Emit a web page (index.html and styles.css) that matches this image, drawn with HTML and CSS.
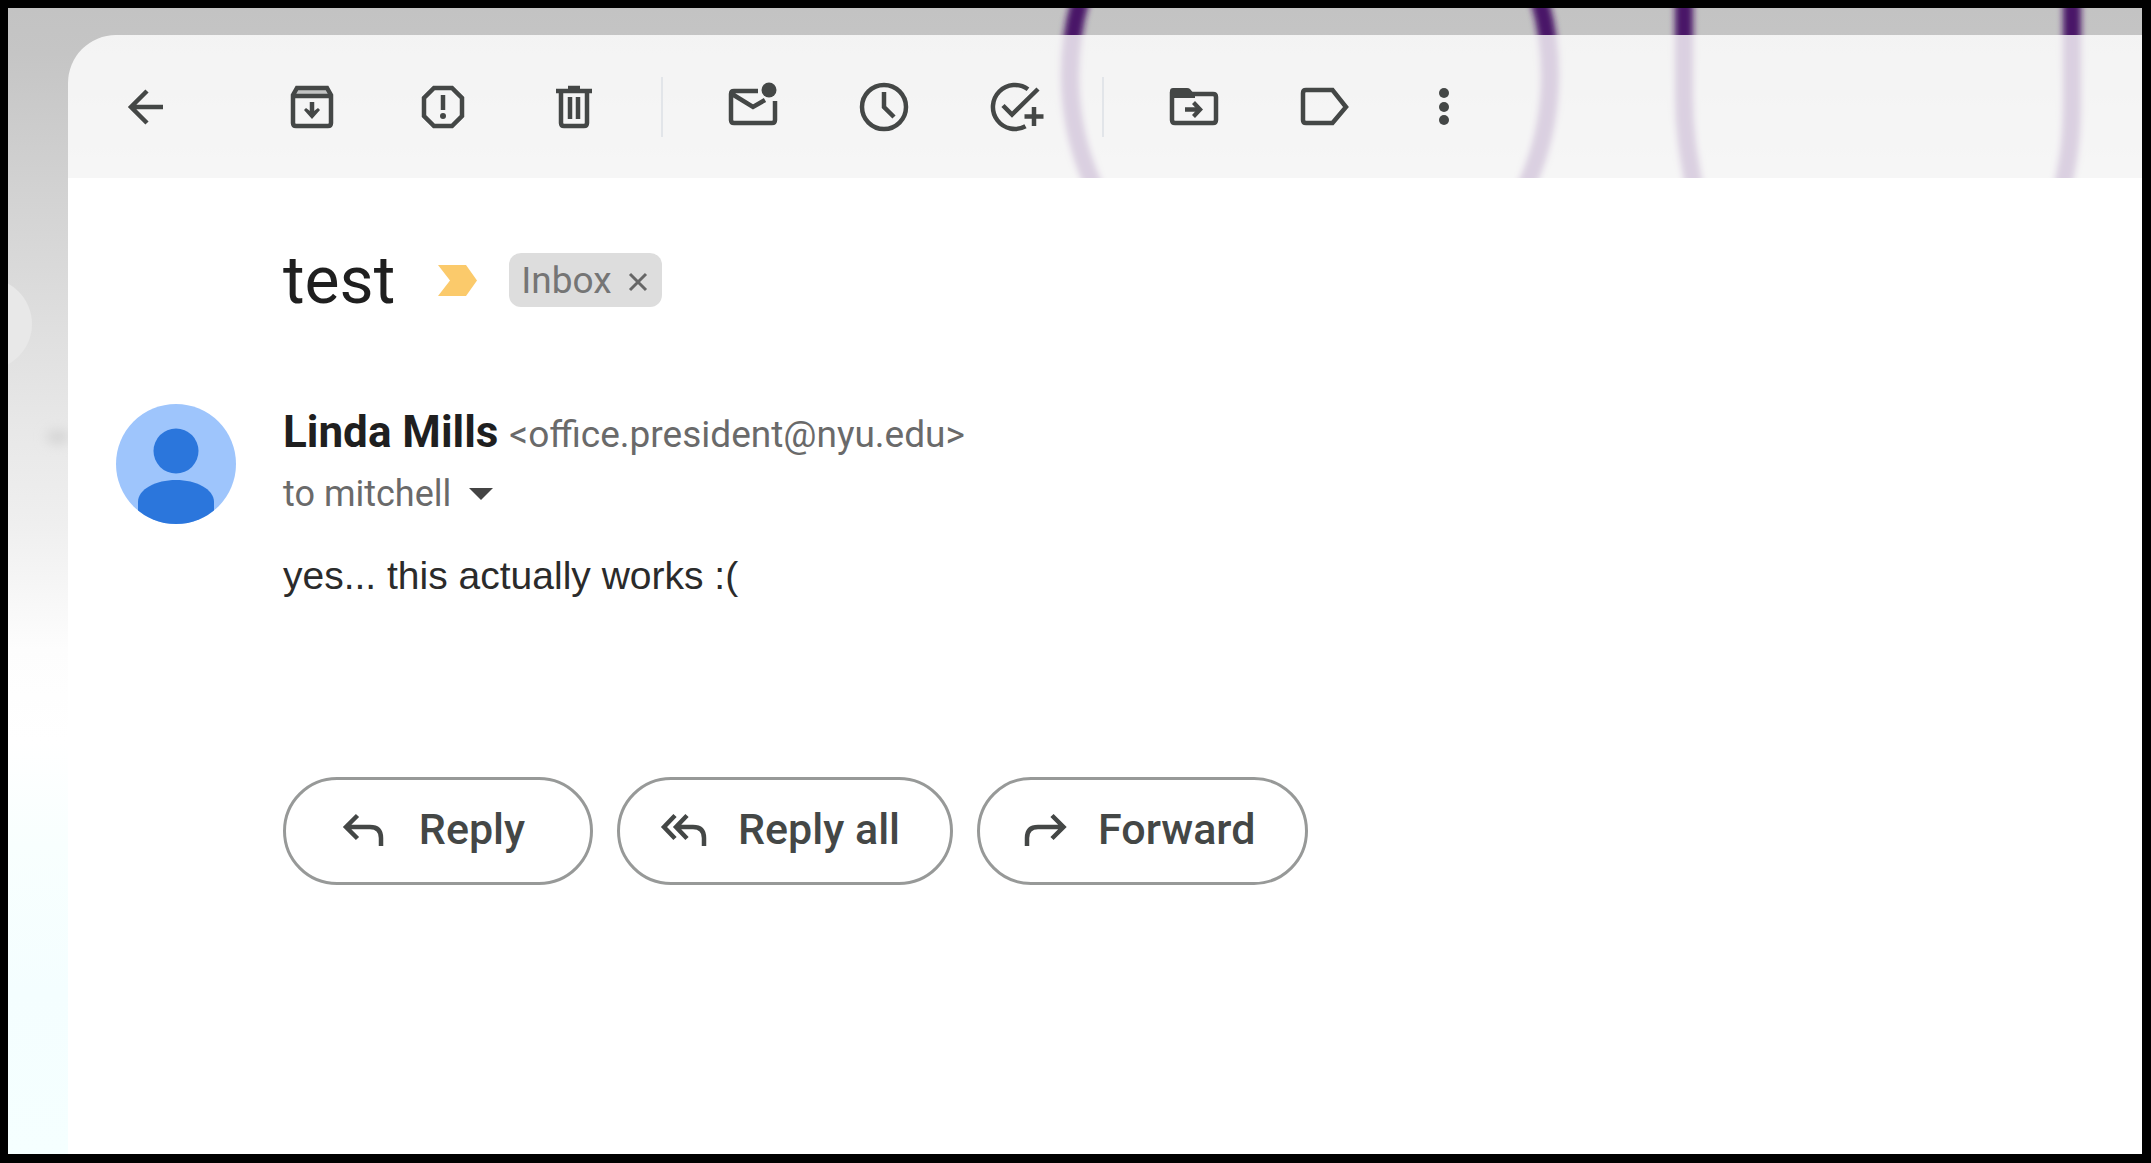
FILE: index.html
```html
<!DOCTYPE html>
<html lang="en">
<head>
<meta charset="utf-8">
<meta name="viewport" content="width=device-width, initial-scale=1">
<title>test</title>
<link rel="stylesheet" href="styles.css">
</head>
<body>
<div class="screen">
  <svg class="backdrop" viewBox="0 0 2134 1146" width="2134" height="1146" aria-hidden="true">
    <defs>
      <filter id="soft" x="-10%" y="-10%" width="120%" height="120%"><feGaussianBlur stdDeviation="3 2"/></filter>
      <filter id="haze" x="-100%" y="-100%" width="300%" height="300%"><feGaussianBlur stdDeviation="6"/></filter>
    </defs>
    <circle cx="-22" cy="316" r="46" fill="#e8e8e8"/>
    <ellipse cx="50" cy="429" rx="12" ry="7" fill="#d4d4d4" filter="url(#haze)"/>
    <g fill="none" stroke="#4a1668" stroke-width="18" filter="url(#soft)">
      <ellipse cx="1302" cy="67" rx="240" ry="256"/>
      <path d="M1676 -40V88C1676 125 1681 150 1688 190M2064 -40V88C2064 125 2062 150 2052 190"/>
    </g>
  </svg>

  <main class="card">
    <div class="toolbar" role="toolbar" aria-label="Message actions">
      <button class="tool back" aria-label="Back">
        <svg viewBox="0 0 58 58"><path d="M30 13 14 29l16 16M14 29h32"/></svg>
      </button>
      <div class="group">
        <button class="tool" aria-label="Archive">
          <svg viewBox="0 0 58 58"><path class="shade" d="M14 11h30l3 6H11z"/><path d="M14 10h30l4 7v28q0 3-3 3H13q-3 0-3-3V17zM10 18h38M29 24v12"/><path class="solid" d="M21 32l2-2 4 3h4l4-3 2 2-8 9z"/></svg>
        </button>
        <button class="tool" aria-label="Report spam">
          <svg viewBox="0 0 58 58"><path d="M20 10h18l10 10v18L38 48H20L10 38V20zM29 17v15"/><circle class="solid" cx="29" cy="38" r="3"/></svg>
        </button>
        <button class="tool" aria-label="Delete">
          <svg viewBox="0 0 58 58"><path d="M11 13h36M23 10h12M16 13v32q0 3 3 3h20q3 0 3-3V13M25 19v22M33 19v22"/></svg>
        </button>
      </div>
      <span class="divider"></span>
      <div class="group">
        <button class="tool" aria-label="Mark as unread">
          <svg viewBox="0 0 58 58"><path d="M34 13H10q-3 0-3 3v26q0 3 3 3h38q3 0 3-3V23M8 16l21 13 12-7"/><circle class="solid" cx="45" cy="12" r="7.5"/></svg>
        </button>
        <button class="tool" aria-label="Snooze">
          <svg viewBox="0 0 58 58"><circle cx="29" cy="29" r="22"/><path d="M29 14v15l10 10"/></svg>
        </button>
        <button class="tool" aria-label="Add to tasks">
          <svg viewBox="0 0 58 58"><path d="M42 11.300A22 22 0 1 0 39.500 48.300M17 27.500l9 9L52 11M48 29v19M38.500 38.500h19"/></svg>
        </button>
      </div>
      <span class="divider"></span>
      <div class="group">
        <button class="tool" aria-label="Move to">
          <svg viewBox="0 0 58 58"><path d="M7 16h41q3 0 3 3v23q0 3-3 3H10q-3 0-3-3zM20 31.500h14"/><path class="solid" d="M5 18v-5q0-3 3-3h14q2 0 3 1l5 6v3H5zM27 26l3-3 8 8.500-8 8.500-3-3 5-5.500z"/></svg>
        </button>
        <button class="tool" aria-label="Labels">
          <svg viewBox="0 0 58 58"><path d="M10 12h26.500L50 29 36.500 45H10q-3 0-3-3V15q0-3 3-3z"/></svg>
        </button>
        <button class="tool narrow" aria-label="More">
          <svg viewBox="12 0 34 58"><g class="solid"><circle cx="29" cy="15" r="5"/><circle cx="29" cy="29" r="5"/><circle cx="29" cy="42" r="5"/></g></svg>
        </button>
      </div>
    </div>

    <article class="message">
      <header class="subject">
        <h1>test</h1>
        <svg class="important" viewBox="0 0 39 31" aria-hidden="true"><path d="M0 0h28l11 15.500L28 31H0l12-15.500z"/></svg>
        <span class="chip">Inbox
          <button aria-label="Remove Inbox label"><svg viewBox="0 0 20 20"><path d="M2 2l16 16M18 2 2 18"/></svg></button>
        </span>
      </header>

      <section class="mail">
        <svg class="avatar" viewBox="0 0 120 120" aria-hidden="true">
          <clipPath id="round"><circle cx="60" cy="60" r="60"/></clipPath>
          <g clip-path="url(#round)">
            <rect width="120" height="120" fill="#9ec5fc"/>
            <circle cx="60" cy="47" r="22.500" fill="#2b76dc"/>
            <path d="M22 120V98c0-13 18-22 38-22s38 9 38 22v22z" fill="#2b76dc"/>
          </g>
        </svg>
        <div class="details">
          <div class="from"><strong>Linda Mills</strong> <span class="address">&lt;office.president@nyu.edu&gt;</span></div>
          <div class="to">to mitchell
            <button aria-label="Show details"><svg viewBox="0 0 24 12"><path d="M0 0h24L12 12z"/></svg></button>
          </div>
          <p class="body">yes... this actually works :(</p>
          <div class="replies">
            <button class="pill"><svg viewBox="0 0 56 56"><path d="M42 45v-8q0-11-11-11H7M18.500 14.500 7 26l11.500 11.500"/></svg>Reply</button>
            <button class="pill"><svg viewBox="0 0 56 56"><path d="M46 45v-8q0-11-11-11H19M29 14.500 18 26l11 11.500M17 14.500 6 26l11 11.500"/></svg>Reply all</button>
            <button class="pill"><svg viewBox="0 0 56 56"><path d="M9 45v-8q0-11 11-11h25M34 14.500 45.500 26 34 37.500"/></svg>Forward</button>
          </div>
        </div>
      </section>
    </article>
  </main>
</div>
</body>
</html>
```
FILE: styles.css
```css
* {
  box-sizing: border-box;
}

body {
  margin: 0;
  min-height: 100vh;
  display: flex;
  padding: 8px 9px 9px 8px;
  background: #000;
  color: #1f1f1f;
  font-family: Roboto, "Liberation Sans", sans-serif;
}

button {
  margin: 0;
  padding: 0;
  border: 0;
  background: none;
  color: inherit;
  font: inherit;
  cursor: pointer;
}

svg {
  display: block;
}

.screen {
  flex: 1;
  position: relative;
  display: flex;
  overflow: hidden;
  padding: 27px 0 0 60px;
  background: linear-gradient(#c3c3c3 0%, #c5c5c5 4%, #d0d0d0 14%, #dfdfdf 28%, #e8e8e8 37%, #efefef 45%, #fdfdfd 56%, #fff 64%, #f8fffe 73%, #f4feff 86%, #f5ffff 100%);
}

.backdrop {
  position: absolute;
  top: 0;
  left: 0;
}

.card {
  position: relative;
  flex: 1;
  display: flex;
  flex-direction: column;
  overflow: hidden;
  border-top-left-radius: 48px;
}

.toolbar {
  display: flex;
  align-items: center;
  height: 143px;
  padding-left: 49px;
  background: rgba(255, 255, 255, 0.8);
  color: #444746;
}

.group {
  display: flex;
  gap: 73px;
}

.tool {
  width: 58px;
  height: 58px;
}

.tool.narrow {
  width: 34px;
}

.back {
  margin-right: 108px;
}

.divider {
  width: 2px;
  height: 60px;
  margin: 0 61px 0 58px;
  background: #e2e5e9;
}

.tool svg {
  width: 100%;
  height: 100%;
  overflow: visible;
}

.tool svg,
.pill svg {
  fill: none;
  stroke: currentColor;
  stroke-width: 4.5;
}

.tool .solid {
  fill: currentColor;
  stroke: none;
}

.tool .shade {
  fill: #c2c3c3;
  stroke: none;
}

.message {
  flex: 1;
  padding: 75px 48px 48px;
  background: #fff;
}

.subject {
  display: flex;
  align-items: center;
  height: 54px;
  margin-bottom: 97px;
  padding-left: 167px;
}

.subject h1 {
  margin: 0;
  font-size: 66px;
  font-weight: 400;
}

.important {
  width: 39px;
  height: 31px;
  margin: 0 32px 0 43px;
  fill: #fbca6b;
}

.chip {
  display: flex;
  align-items: center;
  gap: 16px;
  height: 54px;
  padding: 0 14px 0 12px;
  border-radius: 12px;
  background: #ddd;
  color: #757575;
  font-size: 37px;
}

.chip svg {
  width: 20px;
  height: 20px;
  margin-top: 4px;
  fill: none;
  stroke: #666;
  stroke-width: 3;
}

.mail {
  display: flex;
  gap: 47px;
}

.avatar {
  flex: none;
  width: 120px;
  height: 120px;
}

.from {
  height: 56px;
  font-size: 44px;
  line-height: 56px;
}

.address,
.to {
  color: #6a6a6a;
}

.address {
  font-size: 37px;
}

.to {
  display: flex;
  align-items: center;
  gap: 18px;
  font-size: 36px;
  line-height: 68px;
}

.to svg {
  width: 24px;
  height: 12px;
  fill: #444;
}

.body {
  margin: 0 0 153px;
  color: #2b2b2b;
  font: 39px/96px "Liberation Sans", Arial, sans-serif;
}

.replies {
  display: flex;
  gap: 24px;
}

.pill {
  display: flex;
  align-items: center;
  justify-content: center;
  gap: 24px;
  min-width: 310px;
  height: 108px;
  padding: 0 50px 4px 38px;
  border: 3px solid #979998;
  border-radius: 54px;
  color: #444746;
  font-size: 43px;
  font-weight: 500;
}

.pill svg {
  width: 56px;
  height: 56px;
}
```
